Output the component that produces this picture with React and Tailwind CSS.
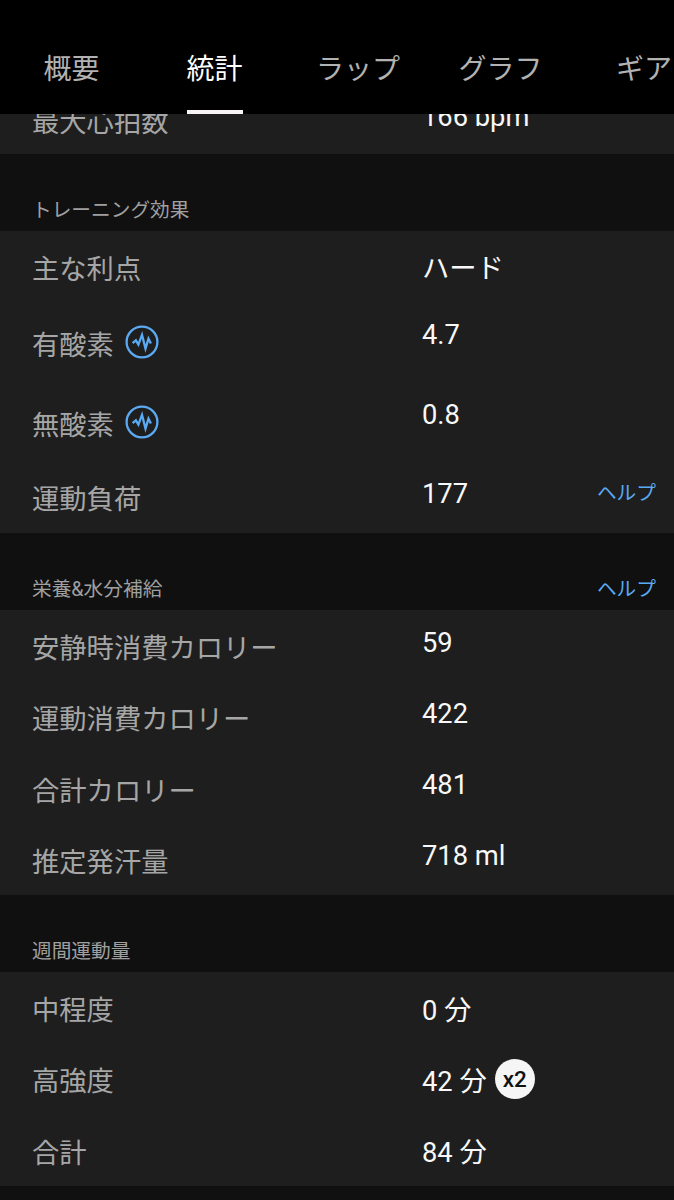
const tabs = [
  { name: '概要', pad: 'ml-[43.5px] w-14' },
  { name: '統計', pad: 'ml-[87px] w-14', active: true },
  { name: 'ラップ', pad: 'ml-[73.5px] w-[84px]' },
  { name: 'グラフ', pad: 'ml-[58.5px] w-[84px]' },
  { name: 'ギア', pad: 'ml-[73.5px] w-14' },
];

function PulseIcon() {
  return (
    <svg className="ml-[11px] size-[34px] shrink-0" viewBox="0 0 34 34" fill="none" stroke="#5aa9f2">
      <circle cx="17" cy="17" r="15.4" strokeWidth="2.3" />
      <path
        d="M7.6 18.2L10.9 15.3L13.4 19.6L17 9.8L20.5 23.6L23.5 13.6L25.9 18.4"
        strokeWidth="2.3"
        strokeLinejoin="miter"
        strokeMiterlimit="8"
      />
    </svg>
  );
}

function SectionTitle({ children, help }) {
  return (
    <div className="flex h-[77px] items-end justify-between pb-[5px] pl-8 pr-[18px] text-[19.7px] leading-[30px] text-[#a0a0a0]">
      <h2>{children}</h2>
      {help && <a className="text-[#5aa9f2]">ヘルプ</a>}
    </div>
  );
}

function Row({ label, value, icon, help, badge, height = 'h-[71.3px]', valuePad = 'pt-[12.6px]' }) {
  return (
    <div className={`flex items-start pl-8 pr-[18px] text-[27.3px] leading-10 ${height}`}>
      <div className={`flex w-[390px] items-center text-[#a6a6a6] ${icon ? 'pt-[24px]' : 'pt-[19px]'}`}>
        <span>{label}</span>
        {icon && <span className="-mt-[8px] flex"><PulseIcon /></span>}
      </div>
      <div className={`flex items-center text-[#f8f8f8] ${valuePad}`}>
        <span>{value}</span>
        {badge && (
          <span className="-mt-[6px] ml-2 flex size-10 items-center justify-center rounded-full bg-[#f5f5f5] text-[22.5px] font-medium text-[#111]">
            {badge}
          </span>
        )}
      </div>
      {help && <a className="ml-auto pt-[17.5px] text-[19.7px] leading-[30px] text-[#5aa9f2]">ヘルプ</a>}
    </div>
  );
}

export default function App() {
  return (
    <div className="flex h-[1200px] w-[674px] flex-col overflow-hidden bg-[#101010] font-['Roboto','Noto_Sans_CJK_JP',sans-serif]" lang="ja">
      <nav className="flex h-[114px] shrink-0 overflow-hidden bg-black text-[28px] leading-10">
        {tabs.map((t) => (
          <div
            key={t.name}
            className={`h-full shrink-0 whitespace-nowrap pt-[50px] ${t.pad} ${
              t.active ? 'border-b-4 border-[#f8f4f5] text-white' : 'text-[#b2b2b2]'
            }`}
          >
            {t.name}
          </div>
        ))}
      </nav>
      <div className="flex h-10 shrink-0 flex-col justify-end overflow-hidden bg-[#1e1e1e]">
        <div className="shrink-0">
          <Row label="最大心拍数" value="166 bpm" height="h-[70.5px]" valuePad="pt-[13px]" />
        </div>
      </div>
      <SectionTitle>トレーニング効果</SectionTitle>
      <div className="h-[302px] bg-[#1e1e1e]">
        <Row label="主な利点" value="ハード" valuePad="pt-[18px]" />
        <Row label="有酸素" icon value="4.7" height="h-[79.5px]" valuePad="pt-[13px]" />
        <Row label="無酸素" icon value="0.8" height="h-[79.5px]" valuePad="pt-[13px]" />
        <Row label="運動負荷" value="177" help />
      </div>
      <SectionTitle help>栄養&amp;水分補給</SectionTitle>
      <div className="h-[285px] bg-[#1e1e1e]">
        <Row label="安静時消費カロリー" value="59" />
        <Row label="運動消費カロリー" value="422" />
        <Row label="合計カロリー" value="481" />
        <Row label="推定発汗量" value="718 ml" />
      </div>
      <SectionTitle>週間運動量</SectionTitle>
      <div className="h-[214px] bg-[#1e1e1e]">
        <Row label="中程度" value="0 分" valuePad="pt-[18.6px]" />
        <Row label="高強度" value="42 分" valuePad="pt-[18.6px]" badge="x2" />
        <Row label="合計" value="84 分" valuePad="pt-[18.8px]" />
      </div>
    </div>
  );
}
